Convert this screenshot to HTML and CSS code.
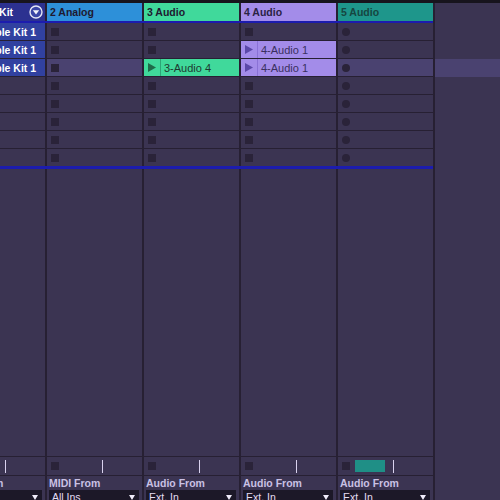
FILE: index.html
```html
<!DOCTYPE html>
<html>
<head>
<meta charset="utf-8">
<link rel="stylesheet" href="styles.css">
</head>
<body>
<div class="topbar"></div>
<div class="grid">
  <!-- headers -->
  <div class="hdr c1"><span class="hname">1 Simple Kit</span>
    <svg class="fold" width="14" height="14" viewBox="0 0 14 14"><circle cx="7" cy="7" r="6" fill="#3a45a6" stroke="#e4e6f6" stroke-width="1.4"/><polygon points="3.8,5.2 10.2,5.2 7,9.6" fill="#f2f3fb"/></svg>
  </div>
  <div class="hdr c2"><span class="hname">2 Analog</span></div>
  <div class="hdr c3"><span class="hname">3 Audio</span></div>
  <div class="hdr c4"><span class="hname">4 Audio</span></div>
  <div class="hdr c5"><span class="hname">5 Audio</span></div>
  <div class="side"></div>

  <div class="blue"></div>
  <div class="side"></div>

  <!-- scene 1 -->
  <div class="slot clip k1"><span class="play"><svg width="8" height="9" viewBox="0 0 8 9"><polygon points="0,0 8,4.5 0,9"/></svg></span><span class="cname">Simple Kit 1</span></div>
  <div class="slot"><i class="stop"></i></div>
  <div class="slot"><i class="stop"></i></div>
  <div class="slot"><i class="stop"></i></div>
  <div class="slot"><i class="rec"></i></div>
  <div class="side"></div>

  <!-- scene 2 -->
  <div class="slot clip k1"><span class="play"><svg width="8" height="9" viewBox="0 0 8 9"><polygon points="0,0 8,4.5 0,9"/></svg></span><span class="cname">Simple Kit 1</span></div>
  <div class="slot"><i class="stop"></i></div>
  <div class="slot"><i class="stop"></i></div>
  <div class="slot clip a4"><span class="play"><svg width="8" height="9" viewBox="0 0 8 9"><polygon points="0,0 8,4.5 0,9"/></svg></span><span class="cname">4-Audio 1</span></div>
  <div class="slot"><i class="rec"></i></div>
  <div class="side"></div>

  <!-- scene 3 (selected) -->
  <div class="slot clip k1"><span class="play"><svg width="8" height="9" viewBox="0 0 8 9"><polygon points="0,0 8,4.5 0,9"/></svg></span><span class="cname">Simple Kit 1</span></div>
  <div class="slot sel"><i class="stop"></i></div>
  <div class="slot clip a3"><span class="play"><svg width="8" height="9" viewBox="0 0 8 9"><polygon points="0,0 8,4.5 0,9"/></svg></span><span class="cname">3-Audio 4</span></div>
  <div class="slot clip a4"><span class="play"><svg width="8" height="9" viewBox="0 0 8 9"><polygon points="0,0 8,4.5 0,9"/></svg></span><span class="cname">4-Audio 1</span></div>
  <div class="slot sel"><i class="rec"></i></div>
  <div class="side sel"></div>

  <!-- scene 4 -->
  <div class="slot"><i class="stop"></i></div>
  <div class="slot"><i class="stop"></i></div>
  <div class="slot"><i class="stop"></i></div>
  <div class="slot"><i class="stop"></i></div>
  <div class="slot"><i class="rec"></i></div>
  <div class="side"></div>

  <!-- scene 5 -->
  <div class="slot"><i class="stop"></i></div>
  <div class="slot"><i class="stop"></i></div>
  <div class="slot"><i class="stop"></i></div>
  <div class="slot"><i class="stop"></i></div>
  <div class="slot"><i class="rec"></i></div>
  <div class="side"></div>

  <!-- scene 6 -->
  <div class="slot"><i class="stop"></i></div>
  <div class="slot"><i class="stop"></i></div>
  <div class="slot"><i class="stop"></i></div>
  <div class="slot"><i class="stop"></i></div>
  <div class="slot"><i class="rec"></i></div>
  <div class="side"></div>

  <!-- scene 7 -->
  <div class="slot"><i class="stop"></i></div>
  <div class="slot"><i class="stop"></i></div>
  <div class="slot"><i class="stop"></i></div>
  <div class="slot"><i class="stop"></i></div>
  <div class="slot"><i class="rec"></i></div>
  <div class="side"></div>

  <!-- scene 8 -->
  <div class="slot last"><i class="stop"></i></div>
  <div class="slot last"><i class="stop"></i></div>
  <div class="slot last"><i class="stop"></i></div>
  <div class="slot last"><i class="stop"></i></div>
  <div class="slot last"><i class="rec"></i></div>
  <div class="side"></div>

  <div class="blue thick"></div>
  <div class="side"></div>

  <!-- empty area -->
  <div class="fill"></div>
  <div class="fill"></div>
  <div class="fill"></div>
  <div class="fill"></div>
  <div class="fill"></div>
  <div class="side"></div>

  <!-- stop row -->
  <div class="stoprow"><i class="stop"></i><span class="gap"></span><i class="tick"></i></div>
  <div class="stoprow"><i class="stop"></i><span class="gap"></span><i class="tick"></i></div>
  <div class="stoprow"><i class="stop"></i><span class="gap"></span><i class="tick"></i></div>
  <div class="stoprow"><i class="stop"></i><span class="gap"></span><i class="tick"></i></div>
  <div class="stoprow"><i class="stop"></i><span class="meter"></span><i class="tick"></i></div>
  <div class="side"></div>

  <!-- labels -->
  <div class="lbl">MIDI From</div>
  <div class="lbl">MIDI From</div>
  <div class="lbl">Audio From</div>
  <div class="lbl">Audio From</div>
  <div class="lbl">Audio From</div>
  <div class="side"></div>

  <!-- dropdowns -->
  <div class="ddcell"><div class="dd"><span>All Ins</span><i class="arrow"></i></div></div>
  <div class="ddcell"><div class="dd"><span>All Ins</span><i class="arrow"></i></div></div>
  <div class="ddcell"><div class="dd"><span>Ext. In</span><i class="arrow"></i></div></div>
  <div class="ddcell"><div class="dd"><span>Ext. In</span><i class="arrow"></i></div></div>
  <div class="ddcell"><div class="dd"><span>Ext. In</span><i class="arrow"></i></div></div>
  <div class="side"></div>
</div>
</body>
</html>
```

FILE: styles.css
```css
* { box-sizing: border-box; margin: 0; padding: 0; }
html, body { width: 500px; height: 500px; overflow: hidden; background: #3b3452; }
body { font-family: "Liberation Sans", Arial, sans-serif; font-size: 11px; }

.topbar { height: 3px; background: #17141d; }

.grid {
  display: grid;
  width: 550px;
  margin-left: -50px;
  grid-template-columns: 95px 95px 95px 95px 95px 1fr;
  grid-template-rows: 18px 2px repeat(7, 18px) 17px 3px 287px 20px 14px 14px;
  column-gap: 2px;
  background: #272033;
}

.side { background: #3b3452; }
.side.sel { background: #4a4270; }

.hdr {
  display: flex;
  align-items: center;
  justify-content: space-between;
  padding: 0 2px 0 3px;
  font-weight: bold;
  font-size: 10.5px;
  white-space: nowrap;
  overflow: hidden;
}
.hdr.c1 { background: #2c3190; color: #ffffff; }
.hdr.c2 { background: #2d90d9; color: #1f1a30; }
.hdr.c3 { background: #40d99b; color: #1f1a30; }
.hdr.c4 { background: #a38ce9; color: #2a2244; }
.hdr.c5 { background: #1e968b; color: #164641; }
.fold { display: block; flex: none; }

.blue { grid-column: 1 / 6; background: #1c1cae; }

.slot {
  display: flex;
  align-items: center;
  background: #3b3452;
  border-bottom: 1px solid #272033;
}
.slot.last { border-bottom: none; }
.slot.sel { background: #4a4270; }

.stop { display: block; width: 8px; height: 8px; margin-left: 4px; background: #2a2339; flex: none; }
.rec { display: block; width: 8px; height: 8px; margin-left: 4px; border-radius: 50%; background: #2a2339; flex: none; }

.clip { align-items: stretch; font-size: 11px; white-space: nowrap; overflow: hidden; }
.clip .play { width: 17px; flex: none; display: flex; align-items: center; padding-left: 4px; border-right: 1px solid; }
.clip .play svg { display: block; }
.clip .cname { display: flex; align-items: center; padding-left: 3px; }

.clip.k1 { background: #3141a0; color: #ffffff; font-weight: bold; font-size: 10.5px; }
.clip.k1 .play { border-color: #2a3690; fill: #e8eaf8; }
.clip.k1 .cname { padding-left: 9px; }
.clip.a3 { background: #40d99b; color: #1e3a30; }
.clip.a3 .play { border-color: #2ea577; fill: #1f6b49; }
.clip.a4 { background: #a38ce9; color: #3a3060; }
.clip.a4 .play { border-color: #8a72d6; fill: #5b48a8; }

.fill { background: #3b3452; }

.stoprow {
  display: flex;
  align-items: center;
  background: #3b3452;
  border-top: 1px solid #272033;
  border-bottom: 1px solid #272033;
}
.stoprow .gap { width: 38px; flex: none; }
.stoprow .meter { width: 30px; height: 12px; margin-left: 5px; margin-right: 3px; background: #1f8f86; flex: none; }
.tick { display: block; width: 1px; height: 13px; margin-left: 5px; background: #d9d2ee; flex: none; }

.lbl {
  background: #3b3452;
  padding-left: 2px;
  font-weight: bold;
  font-size: 10.5px;
  line-height: 14px;
  color: #c9c1e4;
  white-space: nowrap;
  overflow: hidden;
}

.ddcell { background: #3b3452; padding: 0 3px 0 2px; }
.dd {
  height: 14px;
  background: #1c1828;
  color: #e4def4;
  font-size: 10.5px;
  line-height: 14px;
  padding: 0 4px 0 3px;
  display: flex;
  justify-content: space-between;
  align-items: center;
}
.arrow {
  display: block;
  width: 0; height: 0;
  border-left: 3.5px solid transparent;
  border-right: 3.5px solid transparent;
  border-top: 5px solid #f0ecfa;
}
```
